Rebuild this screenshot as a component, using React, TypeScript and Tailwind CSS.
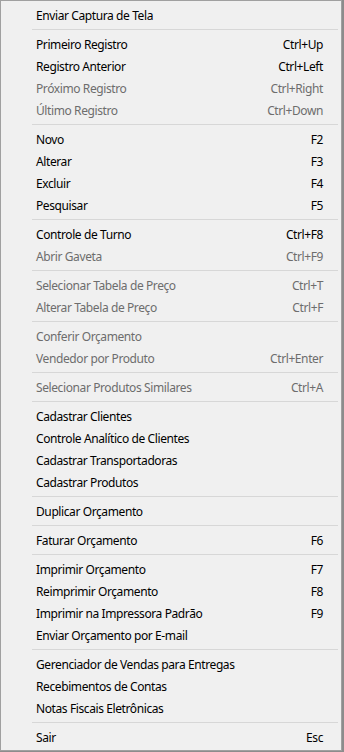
type Item = { label: string; shortcut?: string; disabled?: boolean } | 'sep'

const items: Item[] = [
  { label: 'Enviar Captura de Tela' },
  'sep',
  { label: 'Primeiro Registro', shortcut: 'Ctrl+Up' },
  { label: 'Registro Anterior', shortcut: 'Ctrl+Left' },
  { label: 'Próximo Registro', shortcut: 'Ctrl+Right', disabled: true },
  { label: 'Último Registro', shortcut: 'Ctrl+Down', disabled: true },
  'sep',
  { label: 'Novo', shortcut: 'F2' },
  { label: 'Alterar', shortcut: 'F3' },
  { label: 'Excluir', shortcut: 'F4' },
  { label: 'Pesquisar', shortcut: 'F5' },
  'sep',
  { label: 'Controle de Turno', shortcut: 'Ctrl+F8' },
  { label: 'Abrir Gaveta', shortcut: 'Ctrl+F9', disabled: true },
  'sep',
  { label: 'Selecionar Tabela de Preço', shortcut: 'Ctrl+T', disabled: true },
  { label: 'Alterar Tabela de Preço', shortcut: 'Ctrl+F', disabled: true },
  'sep',
  { label: 'Conferir Orçamento', disabled: true },
  { label: 'Vendedor por Produto', shortcut: 'Ctrl+Enter', disabled: true },
  'sep',
  { label: 'Selecionar Produtos Similares', shortcut: 'Ctrl+A', disabled: true },
  'sep',
  { label: 'Cadastrar Clientes' },
  { label: 'Controle Analítico de Clientes' },
  { label: 'Cadastrar Transportadoras' },
  { label: 'Cadastrar Produtos' },
  'sep',
  { label: 'Duplicar Orçamento' },
  'sep',
  { label: 'Faturar Orçamento', shortcut: 'F6' },
  'sep',
  { label: 'Imprimir Orçamento', shortcut: 'F7' },
  { label: 'Reimprimir Orçamento', shortcut: 'F8' },
  { label: 'Imprimir na Impressora Padrão', shortcut: 'F9' },
  { label: 'Enviar Orçamento por E-mail' },
  'sep',
  { label: 'Gerenciador de Vendas para Entregas' },
  { label: 'Recebimentos de Contas' },
  { label: 'Notas Fiscais Eletrônicas' },
  'sep',
  { label: 'Sair', shortcut: 'Esc' },
]

export default function App() {
  return (
    <div className="w-[344px] h-[752px] bg-[#8c8c8c] overflow-hidden">
      <div
        className="w-[342px] h-[751px] bg-[#f0f0f0] border border-[#a0a0a0] pt-[3px] text-[12px] tracking-[-0.4px]"
        style={{ fontFamily: '"Noto Sans", "Liberation Sans", sans-serif' }}
      >
        {items.map((it, i) =>
          it === 'sep' ? (
            <div key={i} className="h-[7px] flex items-center pl-[31px] pr-[3px]">
              <div className="h-px w-full bg-[#d7d7d7]" />
            </div>
          ) : (
            <div
              key={i}
              className={`h-[22px] leading-[24px] flex justify-between pl-[35px] pr-[18px] ${
                it.disabled ? 'text-[#6d6d6d]' : 'text-black'
              }`}
            >
              <span>{it.label}</span>
              {it.shortcut && <span>{it.shortcut}</span>}
            </div>
          )
        )}
      </div>
    </div>
  )
}
